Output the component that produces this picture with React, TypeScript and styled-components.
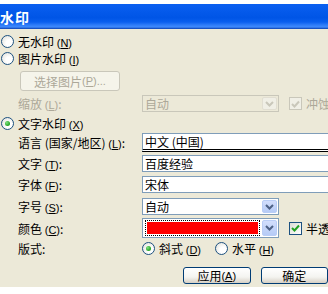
import React from "react";
import styled, { createGlobalStyle } from "styled-components";

const GlobalStyle = createGlobalStyle`
  html, body {
    margin: 0;
    padding: 0;
    background: #ffffff;
  }
  body {
    width: 328px;
    height: 294px;
    overflow: hidden;
    font-family: "Noto Sans CJK SC", "DejaVu Sans", sans-serif;
    font-size: 12px;
    color: #000;
  }
`;

const Window = styled.div`
  width: 328px;
  padding-top: 4px;
`;

const TitleBar = styled.div`
  height: 25px;
  display: flex;
  align-items: center;
  background: linear-gradient(
    to bottom,
    #0a5ff0 0%,
    #0055e6 55%,
    #0a5fee 72%,
    #2f7cf8 84%,
    #3f8afc 92%,
    #0a3fb0 100%
  );
  color: #fff;
  font-weight: bold;
  font-size: 14px;
  letter-spacing: 1px;
  padding-left: 0;
`;

const Body = styled.div`
  background: #ece9d8;
  height: 258px;
  display: flex;
  flex-direction: column;
`;

const Row = styled.div<{ $top: number; $h: number; $indent?: number }>`
  display: flex;
  align-items: center;
  margin-top: ${(p) => p.$top}px;
  height: ${(p) => p.$h}px;
  padding-left: ${(p) => p.$indent ?? 0}px;
  white-space: nowrap;
`;

const Label = styled.span<{ $disabled?: boolean }>`
  width: 124px;
  padding-left: 18px;
  flex-shrink: 0;
  color: ${(p) => (p.$disabled ? "#aca899" : "#000")};
`;

const RadioWrap = styled.span`
  display: inline-flex;
  align-items: center;
  gap: 4px;
`;

const RadioCircle = styled.span<{ $checked?: boolean }>`
  width: 11px;
  height: 11px;
  border-radius: 50%;
  border: 1px solid #1c5180;
  background: radial-gradient(circle at 65% 65%, #ffffff 30%, #dcdcd5 100%);
  display: inline-flex;
  align-items: center;
  justify-content: center;
  flex-shrink: 0;
  &::after {
    content: "";
    display: ${(p) => (p.$checked ? "block" : "none")};
    width: 5px;
    height: 5px;
    border-radius: 50%;
    background: radial-gradient(circle at 35% 35%, #7fe27f 0%, #21a121 70%);
  }
`;

const Mn = styled.span`
  font-family: "Liberation Sans", sans-serif;
  font-size: 11px;
`;

const XpButton = styled.div<{ $w: number; $h: number; $disabled?: boolean }>`
  width: ${(p) => p.$w}px;
  height: ${(p) => p.$h}px;
  box-sizing: border-box;
  border: 1px solid ${(p) => (p.$disabled ? "#c9c7ba" : "#003c74")};
  border-radius: 3px;
  background: ${(p) =>
    p.$disabled ? "#f5f4ea" : "linear-gradient(to bottom, #ffffff 0%, #f4f4f0 60%, #d6d0c5 100%)"};
  color: ${(p) => (p.$disabled ? "#aca899" : "#000")};
  display: flex;
  align-items: center;
  justify-content: center;
`;

const Field = styled.div<{ $w: number; $h: number; $double?: boolean; $disabled?: boolean }>`
  width: ${(p) => p.$w}px;
  height: ${(p) => p.$h}px;
  box-sizing: border-box;
  border: 1px solid ${(p) => (p.$disabled ? "#c9c7ba" : "#7f9db9")};
  ${(p) => (p.$double ? "border-bottom: 3px double #000;" : "")}
  background: ${(p) => (p.$disabled ? "#ece9d8" : "#fff")};
  color: ${(p) => (p.$disabled ? "#aca899" : "#000")};
  display: flex;
  align-items: center;
  padding-left: 2px;
  flex-shrink: 0;
  position: relative;
`;

const ArrowBox = styled.span<{ $disabled?: boolean }>`
  margin-left: auto;
  margin-right: 1px;
  width: 15px;
  height: calc(100% - 2px);
  border-radius: 2px;
  background: ${(p) => (p.$disabled ? "#f0efe6" : "linear-gradient(to bottom, #d2defc, #b6cbf6)")};
  border: 1px solid ${(p) => (p.$disabled ? "#e1ded2" : "#b9cdf6")};
  box-sizing: border-box;
  display: flex;
  align-items: center;
  justify-content: center;
`;

const ColorSwatch = styled.span`
  flex: 1;
  height: 16px;
  box-sizing: border-box;
  border: 1px dotted #000;
  padding: 1px;
  margin-right: 2px;
  display: flex;
  &::before {
    content: "";
    flex: 1;
    background: #ff0000;
  }
`;

const CheckWrap = styled.span<{ $disabled?: boolean }>`
  display: inline-flex;
  align-items: center;
  gap: 4px;
  margin-left: 10px;
  color: ${(p) => (p.$disabled ? "#aca899" : "#000")};
`;

const CheckBox = styled.span<{ $disabled?: boolean }>`
  width: 13px;
  height: 13px;
  box-sizing: border-box;
  border: 1px solid ${(p) => (p.$disabled ? "#c9c7ba" : "#1c5180")};
  background: ${(p) => (p.$disabled ? "#f0efe6" : "linear-gradient(135deg, #dcdcd5, #ffffff)")};
  display: flex;
  align-items: center;
  justify-content: center;
`;

const Chevron = ({ color }: { color: string }) => (
  <svg width="9" height="6" viewBox="0 0 9 6">
    <path d="M1 1 L4.5 4.5 L8 1" fill="none" stroke={color} strokeWidth="2" />
  </svg>
);

const Tick = ({ color }: { color: string }) => (
  <svg width="9" height="8" viewBox="0 0 9 8">
    <path d="M1 4 L3.5 6.5 L8 1.5" fill="none" stroke={color} strokeWidth="2" />
  </svg>
);

const ButtonRow = styled.div`
  display: flex;
  gap: 10px;
  margin-top: 10px;
  padding-left: 183px;
  height: 17px;
`;

const Radio = ({ checked, children }: { checked?: boolean; children: React.ReactNode }) => (
  <RadioWrap>
    <RadioCircle $checked={checked} />
    <span>{children}</span>
  </RadioWrap>
);

export default function App() {
  return (
    <>
      <GlobalStyle />
      <Window>
        <TitleBar>水印</TitleBar>
        <Body>
          <Row $top={4} $h={17} $indent={1}>
            <Radio>
              无水印 <Mn>(<u>N</u>)</Mn>
            </Radio>
          </Row>
          <Row $top={0} $h={17} $indent={1}>
            <Radio>
              图片水印 <Mn>(<u>I</u>)</Mn>
            </Radio>
          </Row>
          <Row $top={4} $h={20} $indent={20}>
            <XpButton $w={100} $h={20} $disabled>
              选择图片 <Mn>(<u>P</u>)...</Mn>
            </XpButton>
          </Row>
          <Row $top={4} $h={17}>
            <Label $disabled>
              缩放 <Mn>(<u>L</u>)</Mn>:
            </Label>
            <Field $w={137} $h={17} $disabled>
              自动
              <ArrowBox $disabled>
                <Chevron color="#c9c7ba" />
              </ArrowBox>
            </Field>
            <CheckWrap $disabled>
              <CheckBox $disabled>
                <Tick color="#c9c7ba" />
              </CheckBox>
              冲蚀
            </CheckWrap>
          </Row>
          <Row $top={3} $h={17} $indent={1}>
            <Radio checked>
              文字水印 <Mn>(<u>X</u>)</Mn>
            </Radio>
          </Row>
          <Row $top={1} $h={19}>
            <Label>
              语言 (国家/地区) <Mn>(<u>L</u>)</Mn>:
            </Label>
            <Field $w={200} $h={19} $double>
              中文 (中国)
            </Field>
          </Row>
          <Row $top={3} $h={17}>
            <Label>
              文字 <Mn>(<u>T</u>)</Mn>:
            </Label>
            <Field $w={200} $h={17}>
              百度经验
            </Field>
          </Row>
          <Row $top={4} $h={17}>
            <Label>
              字体 <Mn>(<u>F</u>)</Mn>:
            </Label>
            <Field $w={200} $h={17}>
              宋体
            </Field>
          </Row>
          <Row $top={5} $h={17}>
            <Label>
              字号 <Mn>(<u>S</u>)</Mn>:
            </Label>
            <Field $w={137} $h={17}>
              自动
              <ArrowBox>
                <Chevron color="#4d6185" />
              </ArrowBox>
            </Field>
          </Row>
          <Row $top={3} $h={20}>
            <Label>
              颜色 <Mn>(<u>C</u>)</Mn>:
            </Label>
            <Field $w={137} $h={20}>
              <ColorSwatch />
              <ArrowBox>
                <Chevron color="#4d6185" />
              </ArrowBox>
            </Field>
            <CheckWrap>
              <CheckBox>
                <Tick color="#21a121" />
              </CheckBox>
              半透明
            </CheckWrap>
          </Row>
          <Row $top={2} $h={17}>
            <Label>版式:</Label>
            <Radio checked>
              斜式 <Mn>(<u>D</u>)</Mn>
            </Radio>
            <span style={{ width: 14 }} />
            <Radio>
              水平 <Mn>(<u>H</u>)</Mn>
            </Radio>
          </Row>
          <ButtonRow>
            <XpButton $w={75} $h={17}>
              应用 <Mn>(<u>A</u>)</Mn>
            </XpButton>
            <XpButton $w={75} $h={17}>
              确定
            </XpButton>
          </ButtonRow>
        </Body>
      </Window>
    </>
  );
}
